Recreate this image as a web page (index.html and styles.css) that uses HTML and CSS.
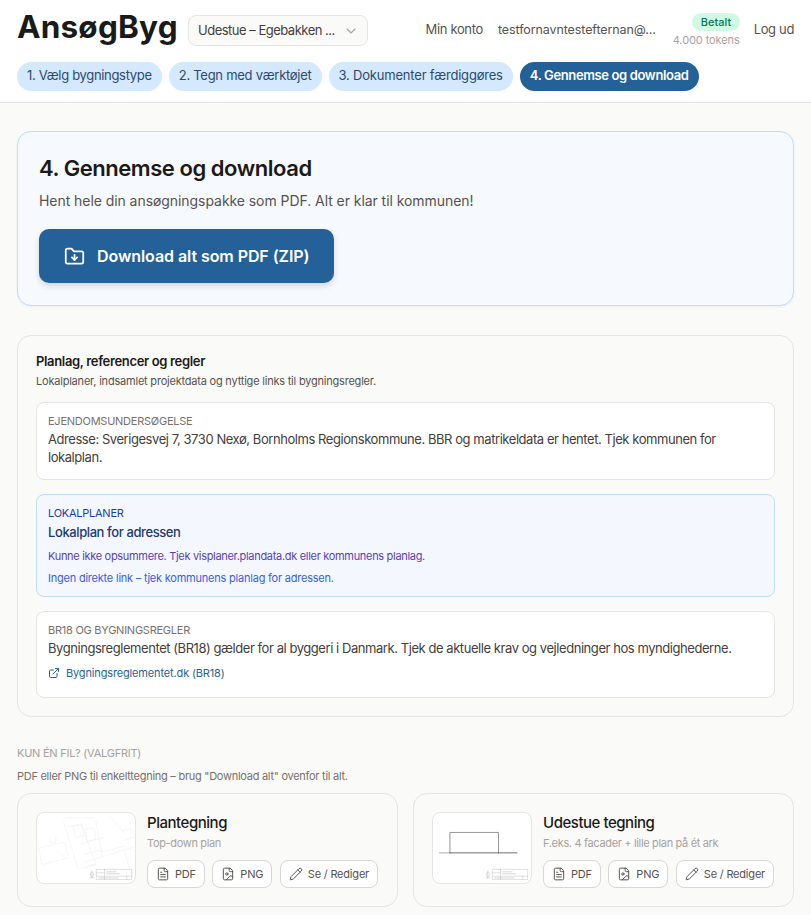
FILE: index.html
```html
<!DOCTYPE html>
<html lang="da">
<head>
<meta charset="utf-8">
<title>AnsøgByg</title>
<link rel="stylesheet" href="styles.css">
</head>
<body>
<header class="header">
  <div class="topbar">
    <div class="logo">AnsøgByg</div>
    <button class="project"><span class="project-name">Udestue – Egebakken ...</span>
      <svg class="chev" viewBox="0 0 24 24"><path d="m6 9 6 6 6-6"/></svg>
    </button>
    <nav class="account">
      <span class="nav-link">Min konto</span>
      <span class="nav-mail">testfornavntestefternan@...</span>
      <div class="plan"><span class="badge">Betalt</span><span class="tokens">4.000 tokens</span></div>
      <span class="nav-link">Log ud</span>
    </nav>
  </div>
  <div class="steps">
    <span class="step step-1">1. Vælg bygningstype</span>
    <span class="step step-2">2. Tegn med værktøjet</span>
    <span class="step step-3">3. Dokumenter færdiggøres</span>
    <span class="step step-active">4. Gennemse og download</span>
  </div>
</header>
<main class="main">
  <section class="hero">
    <h1>4. Gennemse og download</h1>
    <p>Hent hele din ansøgningspakke som PDF. Alt er klar til kommunen!</p>
    <button class="cta">
      <svg class="cta-icon" viewBox="0 0 24 24"><path d="M20 20a2 2 0 0 0 2-2V8a2 2 0 0 0-2-2h-7.9a2 2 0 0 1-1.69-.9L9.6 3.9A2 2 0 0 0 7.93 3H4a2 2 0 0 0-2 2v13a2 2 0 0 0 2 2Z"/><path d="M12 10v6"/><path d="m15 13-3 3-3-3"/></svg>
      Download alt som PDF (ZIP)
    </button>
  </section>

  <section class="panel">
    <h2>Planlag, referencer og regler</h2>
    <p class="panel-sub">Lokalplaner, indsamlet projektdata og nyttige links til bygningsregler.</p>
    <div class="box box-first">
      <div class="label">EJENDOMSUNDERSØGELSE</div>
      <p class="body">Adresse: Sverigesvej 7, 3730 Nexø, Bornholms Regionskommune. BBR og matrikeldata er hentet. Tjek kommunen for lokalplan.</p>
    </div>
    <div class="box box-blue">
      <div class="label label-blue">LOKALPLANER</div>
      <p class="body body-blue">Lokalplan for adressen</p>
      <p class="note note-1">Kunne ikke opsummere. Tjek visplaner.plandata.dk eller kommunens planlag.</p>
      <p class="note note-2">Ingen direkte link – tjek kommunens planlag for adressen.</p>
    </div>
    <div class="box box-last">
      <div class="label">BR18 OG BYGNINGSREGLER</div>
      <p class="body">Bygningsreglementet (BR18) gælder for al byggeri i Danmark. Tjek de aktuelle krav og vejledninger hos myndighederne.</p>
      <a class="ext" href="#">
        <svg class="ext-icon" viewBox="0 0 24 24"><path d="M15 3h6v6"/><path d="M10 14 21 3"/><path d="M18 13v6a2 2 0 0 1-2 2H5a2 2 0 0 1-2-2V8a2 2 0 0 1 2-2h6"/></svg>
        <span>Bygningsreglementet.dk (BR18)</span>
      </a>
    </div>
  </section>

  <h3 class="single-title">KUN ÉN FIL? (VALGFRIT)</h3>
  <p class="single-sub">PDF eller PNG til enkelttegning – brug "Download alt" ovenfor til alt.</p>

  <div class="files">
    <article class="file">
      <div class="thumb">
        <svg viewBox="0 0 100 72">
          <g class="plan-lines">
            <path d="M2 36 28 30 32 46 5 53ZM13 26v5l6-1v-6M12 50l3 2M24 42l5 4"/>
            <path d="M27 9 42 58M32 14 45 11 60 52 46 57"/>
            <path d="M37 14l8-2 3 11-8 2ZM49 17l9-2 2 12-8 2ZM43 32l26-7M47 43l18-5 2 7-17 5M50 56l10-3"/>
            <path d="M60 8 66 40 90 34M75 4l14 16M87 18l10-2 2 9-9 3M70 44l29-9M90 40l6 22"/>
            <path d="M28 5h30" />
          </g>
          <g class="title-block">
            <rect x="61" y="58" width="36" height="10.5"/>
            <path d="M61 65h36M69 58v10.5M61 61.5h8M92 65v3.5"/>
            <path class="tb-text" d="M71 60.5h10M71 62.5h14M63 66.8h20"/>
            <path d="M56 59.5v8M54 66.5h4M54.5 63a1.6 1.6 0 1 0 3 0 1.6 1.6 0 1 0-3 0"/>
          </g>
        </svg>
      </div>
      <div class="file-info">
        <h4>Plantegning</h4>
        <p>Top-down plan</p>
        <div class="actions">
          <button class="act"><svg class="act-icon" viewBox="0 0 24 24"><path d="M15 2H6a2 2 0 0 0-2 2v16a2 2 0 0 0 2 2h12a2 2 0 0 0 2-2V7Z"/><path d="M14 2v4a2 2 0 0 0 2 2h4"/><path d="M10 9H8M16 13H8M16 17H8"/></svg>PDF</button>
          <button class="act"><svg class="act-icon" viewBox="0 0 24 24"><path d="M15 2H6a2 2 0 0 0-2 2v16a2 2 0 0 0 2 2h12a2 2 0 0 0 2-2V7Z"/><path d="M14 2v4a2 2 0 0 0 2 2h4"/><circle cx="10" cy="12" r="2"/><path d="m20 17-1.3-1.3a2.4 2.4 0 0 0-3.4 0L9 22"/></svg>PNG</button>
          <button class="act"><svg class="act-icon" viewBox="0 0 24 24"><path d="M21.17 6.81a2.82 2.82 0 0 0-3.99-3.99L3.84 16.17a2 2 0 0 0-.5.83l-1.32 4.35a.5.5 0 0 0 .62.62l4.35-1.32a2 2 0 0 0 .83-.5Z"/><path d="m15 5 4 4"/></svg>Se / Rediger</button>
        </div>
      </div>
    </article>
    <article class="file">
      <div class="thumb">
        <svg viewBox="0 0 100 72">
          <path class="wall" d="M17 41V20h50v21"/>
          <path class="wall-thin" d="M6 41h11"/>
          <path class="ground" d="M17 41h69"/>
          <g class="title-block">
            <rect x="61" y="58" width="36" height="10.5"/>
            <path d="M61 65h36M69 58v10.5M61 61.5h8M92 65v3.5"/>
            <path class="tb-text" d="M71 60.5h10M71 62.5h14M63 66.8h20"/>
            <path d="M56 59.5v8M54 66.5h4M54.5 63a1.6 1.6 0 1 0 3 0 1.6 1.6 0 1 0-3 0"/>
          </g>
        </svg>
      </div>
      <div class="file-info">
        <h4>Udestue tegning</h4>
        <p>F.eks. 4 facader + lille plan på ét ark</p>
        <div class="actions">
          <button class="act"><svg class="act-icon" viewBox="0 0 24 24"><path d="M15 2H6a2 2 0 0 0-2 2v16a2 2 0 0 0 2 2h12a2 2 0 0 0 2-2V7Z"/><path d="M14 2v4a2 2 0 0 0 2 2h4"/><path d="M10 9H8M16 13H8M16 17H8"/></svg>PDF</button>
          <button class="act"><svg class="act-icon" viewBox="0 0 24 24"><path d="M15 2H6a2 2 0 0 0-2 2v16a2 2 0 0 0 2 2h12a2 2 0 0 0 2-2V7Z"/><path d="M14 2v4a2 2 0 0 0 2 2h4"/><circle cx="10" cy="12" r="2"/><path d="m20 17-1.3-1.3a2.4 2.4 0 0 0-3.4 0L9 22"/></svg>PNG</button>
          <button class="act"><svg class="act-icon" viewBox="0 0 24 24"><path d="M21.17 6.81a2.82 2.82 0 0 0-3.99-3.99L3.84 16.17a2 2 0 0 0-.5.83l-1.32 4.35a.5.5 0 0 0 .62.62l4.35-1.32a2 2 0 0 0 .83-.5Z"/><path d="m15 5 4 4"/></svg>Se / Rediger</button>
        </div>
      </div>
    </article>
  </div>
</main>
</body>
</html>
```

FILE: styles.css
```css
* { box-sizing: border-box; }
html, body { margin: 0; padding: 0; height: 915px; overflow: hidden; }
body { background: #fafaf8; color: #44403c; font-family: Inter, "Noto Sans", sans-serif; font-size: 13px; }
svg { display: block; fill: none; stroke: currentColor; stroke-linecap: round; stroke-linejoin: round; stroke-width: 2; }
button { font-family: inherit; cursor: pointer; }
p, h1, h2, h3, h4 { margin: 0; }

.header { height: 103px; background: #fff; border-bottom: 1px solid #e7e5e4; padding: 15px 17px 0; }
.topbar { display: flex; align-items: flex-start; height: 32px; }
.logo { width: 161px; margin-right: 10px; font-size: 31.5px; line-height: 24px; font-weight: 700; letter-spacing: .2px; color: #1a1a1a; white-space: nowrap; }
.project { width: 180px; height: 31px; display: flex; align-items: center; justify-content: space-between; padding: 0 8px 2px 9px; border: 1px solid #e7e5e4; border-radius: 8px; background: #fafaf8; color: #44403c; font-size: 13px; letter-spacing: -.5px; white-space: nowrap; }
.chev { width: 16px; height: 16px; margin-top: 2px; color: #a8a29e; stroke-width: 1.6; flex: none; }
.account { margin-left: auto; height: 28px; display: flex; align-items: center; color: #57534e; font-size: 13px; letter-spacing: -.35px; white-space: nowrap; }
.nav-mail { margin-left: 15px; font-size: 12.5px; letter-spacing: -.1px; }
.plan { margin-left: 17px; margin-top: 1px; display: flex; flex-direction: column; align-items: flex-end; gap: 2px; }
.badge { height: 18px; line-height: 18px; padding: 0 8.5px; border-radius: 9px; background: #d1fae5; color: #047857; font-size: 11px; font-weight: 500; letter-spacing: 0; }
.tokens { font-size: 11px; line-height: 14px; color: #a8a29e; letter-spacing: -.1px; }
.plan + .nav-link { margin-left: 14px; }

.steps { display: flex; gap: 7px; margin-top: 15px; }
.step { height: 29px; line-height: 27px; padding: 0 10px; border-radius: 15px; background: #d4e9fd; color: #2d4a6e; font-size: 13px; font-weight: 400; white-space: nowrap; }
.step-1 { letter-spacing: -.32px; }
.step-2 { letter-spacing: -.27px; }
.step-3 { letter-spacing: -.2px; }
.step-active { background: #246199; color: #fff; font-weight: 600; letter-spacing: -.37px; }

.main { padding: 28px 17px 0; }
.hero { height: 175px; padding: 22px 21px 0; border: 1px solid #bfdcfb; border-radius: 14px; background: #f6f9fd; box-shadow: 0 1px 3px rgba(0,0,0,.05); }
.hero h1 { font-size: 22px; line-height: 28px; font-weight: 600; color: #1c1917; letter-spacing: -.45px; }
.hero p { margin-top: 9px; font-size: 14px; line-height: 20px; color: #57534e; letter-spacing: -.06px; }
.cta { margin-top: 18px; width: 295px; height: 54px; display: flex; align-items: center; gap: 12px; padding: 0 0 0 25px; border: 0; border-radius: 10px; background: #246199; color: #fff; font-size: 16px; font-weight: 600; letter-spacing: -.07px; box-shadow: 0 3px 6px rgba(0,0,0,.14); white-space: nowrap; }
.cta-icon { width: 21px; height: 21px; }

.panel { margin-top: 29px; height: 382px; padding: 17px 18px 0; border: 1px solid #e7e5e4; border-radius: 14px; background: #fafaf8; }
.panel h2 { font-size: 13px; line-height: 16px; font-weight: 600; color: #1c1917; letter-spacing: -.34px; }
.panel-sub { margin-top: 5px; font-size: 11px; line-height: 14px; color: #57534e; letter-spacing: -.21px; }
.box { margin-top: 14px; padding: 11px 11px 0; border: 1px solid #e7e5e4; border-radius: 8px; background: #fff; }
.box-first { margin-top: 14px; height: 78px; }
.box-blue { height: 103px; background: #f4f8fe; border-color: #bfdcfb; }
.box-last { height: 87px; }
.label { font-size: 11px; line-height: 14px; color: #78716c; letter-spacing: -.25px; }
.label-blue { color: #1e40af; }
.body { margin-top: 2px; font-size: 13px; line-height: 18px; color: #44403c; letter-spacing: -.44px; }
.body-blue { margin-top: 3px; color: #1e3a6e; font-weight: 500; letter-spacing: -.4px; }
.note { font-size: 11px; line-height: 14px; }
.note-1 { margin-top: 8px; color: #5b3fb5; letter-spacing: -.31px; }
.note-2 { margin-top: 8px; color: #3b5ee0; letter-spacing: -.22px; }
.ext { margin-top: 9px; display: flex; align-items: center; gap: 6px; color: #2a6496; font-size: 11px; line-height: 14px; text-decoration: none; letter-spacing: -.15px; }
.ext-icon { width: 12px; height: 12px; }

.single-title { margin-top: 29px; font-size: 11px; line-height: 14px; font-weight: 400; color: #a8a29e; letter-spacing: -.25px; }
.single-sub { margin-top: 9px; font-size: 11px; line-height: 14px; color: #78716c; letter-spacing: -.27px; }
.files { margin-top: 10px; display: grid; grid-template-columns: 381px 381px; gap: 15px; }
.file { height: 114px; display: flex; gap: 11px; padding: 18px; border: 1px solid #e7e5e4; border-radius: 14px; background: #fafaf8; }
.thumb { width: 100px; height: 72px; flex: none; border: 1px solid #e7e5e4; border-radius: 8px; background: #fff; overflow: hidden; }
.thumb svg { width: 98px; height: 70px; stroke-width: .4; color: #e2e2e2; }
.plan-lines { stroke-width: .35; color: #e4e4e4; }
.title-block { color: #a3a3a3; stroke-width: .35; }
.tb-text { stroke-dasharray: 1 .4; }
.wall { stroke: #888; stroke-width: .9; stroke-linecap: square; }
.wall-thin { stroke: #888; stroke-width: .7; }
.ground { stroke: #444; stroke-width: .8; }
.file-info { min-width: 0; }
.file-info h4 { margin-top: 1px; font-size: 15px; line-height: 20px; font-weight: 500; color: #1c1917; letter-spacing: -.47px; }
.file-info p { margin-top: 3px; font-size: 11px; line-height: 14px; color: #a8a29e; letter-spacing: -.34px; }
.actions { display: flex; gap: 7.5px; margin-top: 10px; }
.act { height: 28px; display: flex; align-items: center; gap: 5px; padding: 0 8px; border: 1px solid #d9d6d3; border-radius: 8px; background: #fff; color: #57534e; font-size: 11px; white-space: nowrap; letter-spacing: -.2px; }
.act-icon { width: 14px; height: 14px; flex: none; stroke-width: 1.7; }
```
